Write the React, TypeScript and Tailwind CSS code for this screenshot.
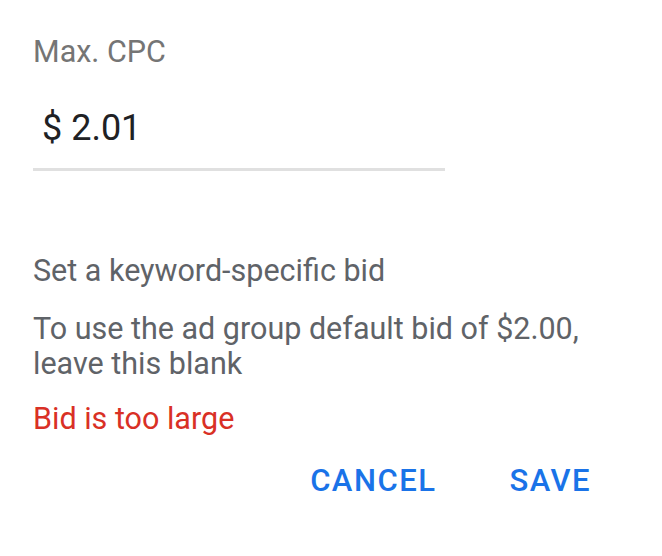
import React from "react";

export default function App() {
  return (
    <div className="w-[662px] h-[556px] bg-white font-['Roboto',sans-serif] pl-[33px] flex flex-col">
      <div className="mt-[34px] text-[30.5px] leading-[36px] text-[#757575]">Max. CPC</div>
      <div className="mt-[36px] w-[412px] border-b-[3px] border-[#e0e0e0] pb-[18px]">
        <div className="pl-[9px] text-[36px] leading-[44px] text-[#202124]">$ 2.01</div>
      </div>
      <div className="mt-[82px] text-[30.5px] leading-[35px] text-[#5f6368]">Set a keyword-specific bid</div>
      <div className="mt-[23px] w-[590px] text-[30.5px] leading-[35px] text-[#5f6368]">
        To use the ad group default bid of $2.00, leave this blank
      </div>
      <div className="mt-[20px] text-[30.5px] leading-[35px] text-[#d93025]">Bid is too large</div>
      <div className="mt-[27px] flex justify-end gap-[73px] pr-[71px]">
        <button className="text-[31px] leading-[36px] font-medium tracking-[1.5px] text-[#1a73e8]">CANCEL</button>
        <button className="text-[31px] leading-[36px] font-medium tracking-[1.5px] text-[#1a73e8]">SAVE</button>
      </div>
    </div>
  );
}
